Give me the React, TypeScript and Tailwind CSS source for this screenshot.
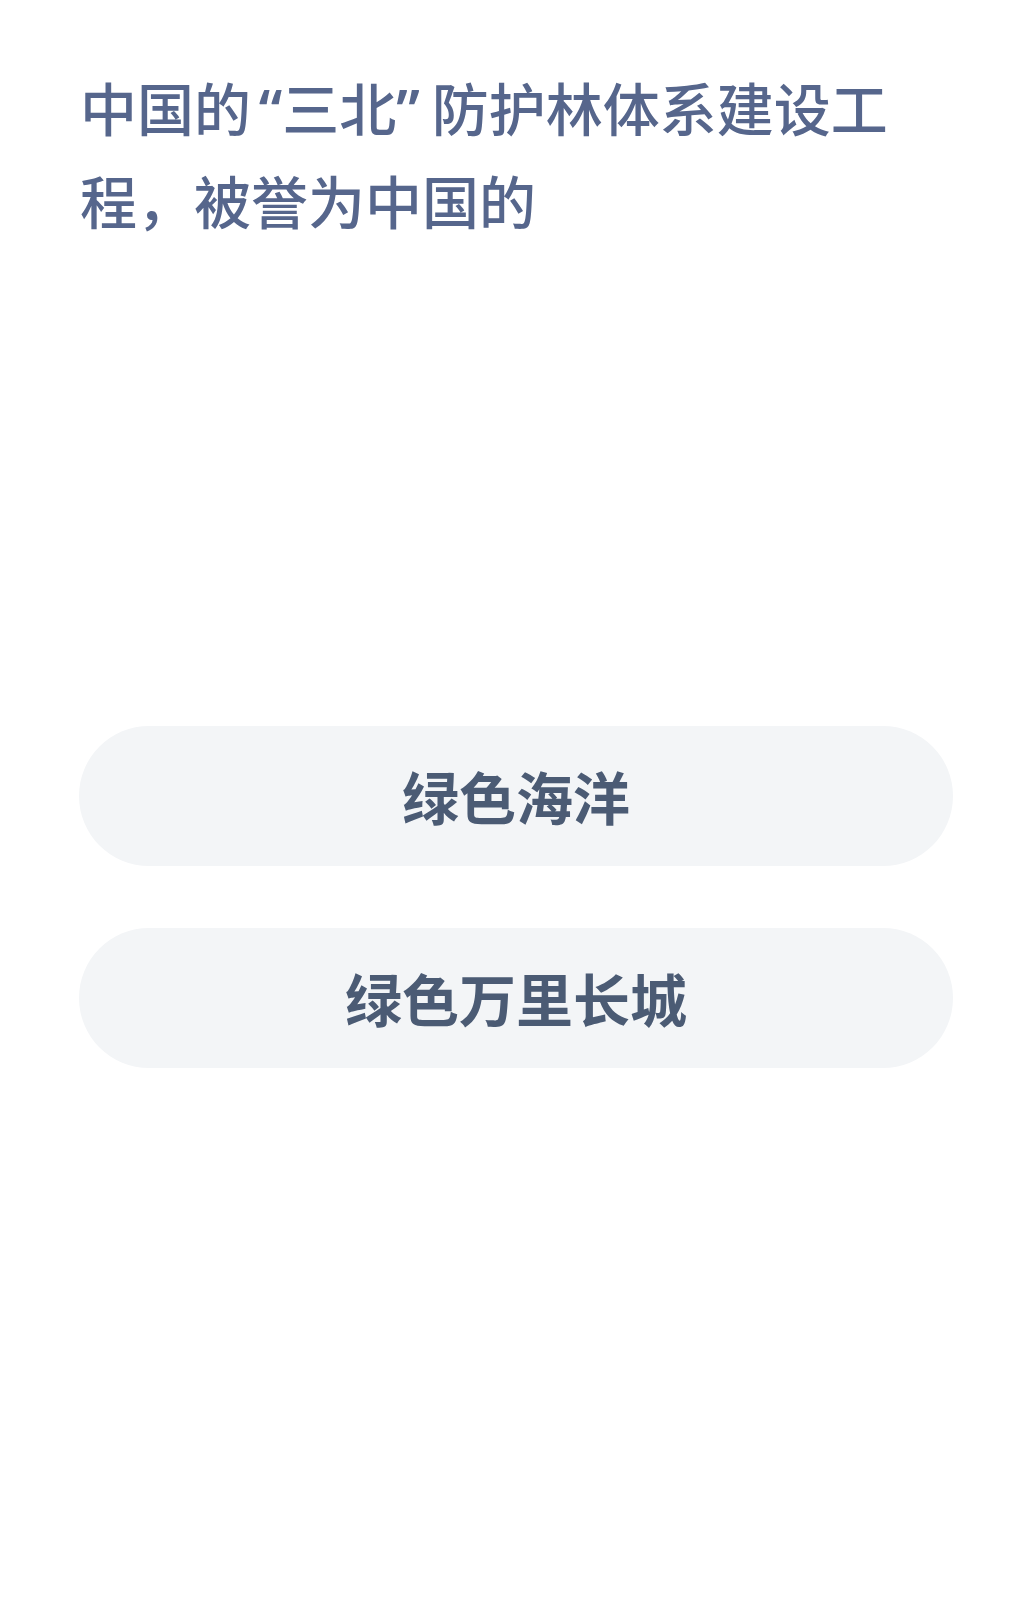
const OPTIONS = ['绿色海洋', '绿色万里长城'];

export default function App() {
  return (
    <div
      className="w-full bg-white pb-[500px]"
      style={{ fontFamily: '"Noto Sans CJK SC", "Noto Sans", sans-serif' }}
    >
      <div className="pl-[80px] pt-[61px]">
        <h1 className="w-[880px] text-[57px] font-medium leading-[90px] text-[#56668c]">
          中国的
          <span className="inline-block w-[0.55em] text-right font-['Noto_Sans'] font-semibold">“</span>
          三北
          <span className="inline-block w-[0.62em] text-left font-['Noto_Sans'] font-semibold">”</span>
          防护林体系建设工程，被誉为中国的
        </h1>
      </div>
      <div className="mt-[482px] flex flex-col gap-[62px] pl-[79px]">
        {OPTIONS.map((o) => (
          <button
            key={o}
            type="button"
            className="flex h-[140px] w-[874px] items-center justify-center rounded-full bg-[#f3f5f7] text-[57px] font-bold text-[#4b5b74]"
          >
            {o}
          </button>
        ))}
      </div>
    </div>
  );
}
